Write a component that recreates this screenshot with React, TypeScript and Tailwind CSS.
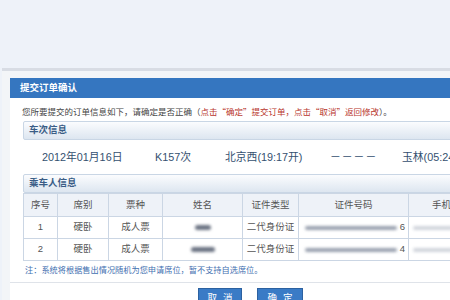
import React from "react";

const font = { fontFamily: '"Liberation Sans", "Noto Sans CJK SC", sans-serif' };
const cjk = { fontFamily: '"Noto Sans CJK SC", sans-serif' };

const Blur = ({ w, h = 5, c = "bg-gray-400" }: { w: number; h?: number; c?: string }) => (
  <span className={`inline-block ${c} blur-[1.5px] rounded-sm align-middle`} style={{ width: w, height: h }} />
);

const SectionHeader = ({ title }: { title: string }) => (
  <div className="h-[19px] flex items-center pl-[5px] border border-[#c9d6e5] rounded-[2px] bg-gradient-to-b from-[#fbfcfe] to-[#dde6f0] text-[9.5px] font-bold text-[#3a5d86]">
    {title}
  </div>
);

const passengers = [
  { no: "1", seat: "硬卧", type: "成人票", name: 16, id: "6", phone: 40 },
  { no: "2", seat: "硬卧", type: "成人票", name: 24, id: "4", phone: 40 },
];

export default function App() {
  return (
    <div className="w-[450px] h-[300px] overflow-hidden bg-[#eef2f9]" style={font}>
      <div className="mt-[68px] ml-[2px] w-[540px] border-t-[3px] border-[#d8dce4] bg-[#f3f5f8] pl-[8px] pt-[7px]">
        {/* title bar */}
        <div className="h-[20px] bg-[#3576c0] flex items-center pl-[10px] text-white text-[9.5px] font-bold">
          提交订单确认
        </div>

        <div className="bg-white pl-[13px]">
          <div className="h-[23px] flex items-center text-[8.5px] text-[#444] pt-[3px] -ml-[1px] whitespace-nowrap" style={cjk}>
            您所要提交的订单信息如下，请确定是否正确（
            <span className="text-[#b8352c]">点击“确定”提交订单，点击“取消”返回修改</span>）。
          </div>

          <SectionHeader title="车次信息" />
          <div className="h-[34px] flex items-center text-[10.8px] text-[#34506f] whitespace-nowrap">
            <span className="ml-[19px] w-[113px]">2012年01月16日</span>
            <span className="w-[70px]">K157次</span>
            <span className="w-[105px]">北京西(19:17开)</span>
            <span className="w-[72px] tracking-[1px]">－－－－</span>
            <span>玉林(05:24开)</span>
          </div>

          <SectionHeader title="乘车人信息" />

          <table className="border-collapse text-[9.5px] text-[#555]">
            <thead>
              <tr className="bg-[#eef2f8] h-[23px]">
                <th className="w-[34px] border border-[#cbd6e4] font-normal">序号</th>
                <th className="w-[51px] border border-[#cbd6e4] font-normal">席别</th>
                <th className="w-[54px] border border-[#cbd6e4] font-normal">票种</th>
                <th className="w-[80px] border border-[#cbd6e4] font-normal">姓名</th>
                <th className="w-[56px] border border-[#cbd6e4] font-normal">证件类型</th>
                <th className="w-[110px] border border-[#cbd6e4] font-normal">证件号码</th>
                <th className="w-[90px] border border-[#cbd6e4] font-normal text-left pl-[23px]">手机号</th>
              </tr>
            </thead>
            <tbody>
              {passengers.map((p) => (
                <tr key={p.no} className="h-[22px] text-center">
                  <td className="border border-[#cbd6e4]">{p.no}</td>
                  <td className="border border-[#cbd6e4]">{p.seat}</td>
                  <td className="border border-[#cbd6e4]">{p.type}</td>
                  <td className="border border-[#cbd6e4]">
                    <Blur w={p.name} c="bg-gray-500" />
                  </td>
                  <td className="border border-[#cbd6e4]">二代身份证</td>
                  <td className="border border-[#cbd6e4] text-right pr-[3px]">
                    <Blur w={92} h={4} /> {p.id}
                  </td>
                  <td className="border border-[#cbd6e4] text-left pl-[4px]">
                    <Blur w={p.phone} h={4} c="bg-gray-300" />
                  </td>
                </tr>
              ))}
            </tbody>
          </table>

          <div className="h-[21px] flex items-center text-[8.2px] text-[#3f6fb0] pl-[2px] whitespace-nowrap">
            注：系统将根据售出情况随机为您申请席位，暂不支持自选席位。
          </div>
        </div>

        <div className="bg-white border-t border-[#dfe3e9] h-[30px] flex items-start pt-[5px] pl-[188px] gap-[15px]">
          <button className="w-[44px] h-[20px] bg-[#3a7bc6] border border-[#2c61a0] text-white text-[9.5px] tracking-[6px] pl-[6px]">
            取消
          </button>
          <button className="w-[46px] h-[20px] bg-[#3a7bc6] border border-[#2c61a0] text-white text-[9.5px] tracking-[6px] pl-[6px]">
            确定
          </button>
        </div>
      </div>
    </div>
  );
}
